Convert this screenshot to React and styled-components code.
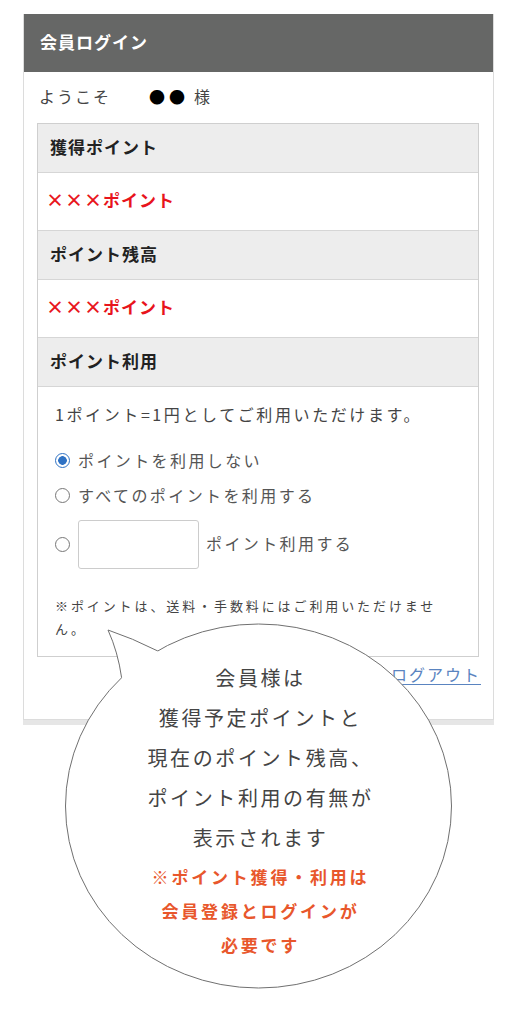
import React from "react";
import styled, { createGlobalStyle } from "styled-components";

const GlobalStyle = createGlobalStyle`
	body {
		margin: 0;
		background: #fff;
		font-family: "Noto Sans CJK JP", "Noto Sans", sans-serif;
		color: #333;
	}
`;

const sections = [
	{ id: 1, title: "獲得ポイント", value: "ポイント" },
	{ id: 2, title: "ポイント残高", value: "ポイント" },
];

const bubbleLines = [
	"会員様は",
	"獲得予定ポイントと",
	"現在のポイント残高、",
	"ポイント利用の有無が",
	"表示されます",
];

const noteLines = ["※ポイント獲得・利用は", "会員登録とログインが", "必要です"];

const App = () => {
	return (
		<Page>
			<GlobalStyle />
			<Card>
				<CardHeader>会員ログイン</CardHeader>
				<CardBody>
					<Welcome>
						ようこそ<Name>●●</Name>様
					</Welcome>
					<PointBox>
						{sections.map(({ id, title, value }) => (
							<React.Fragment key={id}>
								<SectionTitle>{title}</SectionTitle>
								<ValueRow>
									<Cross>×××</Cross>
									{value}
								</ValueRow>
							</React.Fragment>
						))}
						<SectionTitle>ポイント利用</SectionTitle>
						<UseArea>
							<Intro>1ポイント=1円としてご利用いただけます。</Intro>
							<Option>
								<Radio type="radio" name="use" defaultChecked />
								ポイントを利用しない
							</Option>
							<Option $gap="11px">
								<Radio type="radio" name="use" />
								すべてのポイントを利用する
							</Option>
							<Option $gap="13px">
								<Radio type="radio" name="use" />
								<PointInput type="text" />
								<span>ポイント利用する</span>
							</Option>
							<Note>
								※ポイントは、送料・手数料にはご利用いただけませ
								<br />
								ん。
							</Note>
						</UseArea>
					</PointBox>
					<LogoutRow>
						<Logout href="#">ログアウト</Logout>
					</LogoutRow>
				</CardBody>
			</Card>

			{/* speech bubble drawn over the card */}
			<Bubble viewBox="0 0 519 1018" width="519" height="1018">
				<ellipse cx="258.5" cy="806" rx="193" ry="182" fill="#fff" stroke="#707070" strokeWidth="1" />
				<path d="M 121.6 677.7 Q 118 652 108 630 Q 132 638 157.6 650.9 L 175 680 L 140 700 Z" fill="#fff" />
				<path d="M 121.6 677.7 Q 118 652 108 630 Q 132 638 157.6 650.9" fill="none" stroke="#707070" strokeWidth="1" />
			</Bubble>
			<BubbleText>
				{bubbleLines.map((line) => (
					<Line key={line}>{line}</Line>
				))}
				<RedBlock>
					{noteLines.map((line) => (
						<RedLine key={line}>{line}</RedLine>
					))}
				</RedBlock>
			</BubbleText>
		</Page>
	);
};

const Page = styled.div`
	position: relative;
	width: 519px;
	height: 1018px;
	padding: 14px 25px 0 23px;
	box-sizing: border-box;
	overflow: hidden;
`;

const Card = styled.section`
	border: 1px solid #dcdcdc;
	border-top: none;
	background: #fff;
	box-shadow: 0 5px 0 #e6e6e6;
`;

const CardHeader = styled.h2`
	margin: 0;
	height: 58px;
	box-sizing: border-box;
	display: flex;
	align-items: center;
	padding: 0 0 4px 16px;
	background: #666766;
	color: #fff;
	font-size: 17px;
	font-weight: 700;
	letter-spacing: 1px;
`;

const CardBody = styled.div`
	padding: 14px 14px 31px 13px;
`;

const Welcome = styled.p`
	margin: 0 0 13px 2px;
	height: 24px;
	line-height: 20px;
	font-size: 16px;
	letter-spacing: 2px;
	color: #444;
`;

const Name = styled.span`
	color: #000;
	margin: 0 5px 0 38px;
	letter-spacing: 4px;
`;

const PointBox = styled.div`
	border: 1px solid #cfcfcf;
`;

const SectionTitle = styled.h3`
	margin: 0;
	height: 49px;
	box-sizing: border-box;
	display: flex;
	align-items: center;
	padding: 0 0 4px 12px;
	background: #ededed;
	border-bottom: 1px solid #d6d6d6;
	font-size: 17px;
	font-weight: 700;
	letter-spacing: 1px;
	color: #222;
`;

const ValueRow = styled.div`
	height: 58px;
	box-sizing: border-box;
	display: flex;
	align-items: center;
	padding: 0 0 5px 8px;
	border-bottom: 1px solid #d6d6d6;
	color: #e8141c;
	font-size: 17px;
	font-weight: 700;
	letter-spacing: 1px;
`;

const Cross = styled.span`
	font-size: 18px;
	letter-spacing: 1px;
	font-weight: 700;
`;

const UseArea = styled.div`
	padding: 14px 18px 16px 17px;
	color: #444;
`;

const Intro = styled.p`
	margin: 0 0 21px;
	line-height: 26px;
	font-size: 16px;
	letter-spacing: 2.6px;
`;

const Option = styled.label`
	display: flex;
	align-items: center;
	gap: 8px;
	margin-top: ${(p) => p.$gap || "0"};
	min-height: 24px;
	font-size: 16px;
	letter-spacing: 2.4px;
	color: #555;
	span {
		margin-bottom: 3px;
	}
`;

const Radio = styled.input`
	appearance: none;
	margin: 0;
	width: 15px;
	height: 15px;
	flex: none;
	border-radius: 50%;
	border: 1px solid #777;
	background: #fff;
	&:checked {
		border-color: #2f72c4;
		background: radial-gradient(circle, #2f72c4 0 4px, #fff 4.6px);
	}
`;

const PointInput = styled.input`
	width: 121px;
	height: 49px;
	box-sizing: border-box;
	border: 1px solid #cccccc;
	border-radius: 3px;
	margin: 0 -1px 0 0;
`;

const Note = styled.p`
	margin: 25px 0 0;
	line-height: 23px;
	font-size: 13px;
	letter-spacing: 2.9px;
	color: #444;
`;

const LogoutRow = styled.div`
	display: flex;
	justify-content: flex-end;
	margin-top: 5px;
	line-height: 24px;
	padding-bottom: 2px;
`;

const Logout = styled.a`
	color: #5a84c0;
	font-size: 16px;
	letter-spacing: 2px;
	margin-right: -2px;
	text-decoration: underline;
	text-underline-offset: 3px;
`;

const Bubble = styled.svg`
	position: absolute;
	top: 0;
	left: 0;
	pointer-events: none;
`;

const BubbleText = styled.div`
	position: absolute;
	top: 658px;
	left: 0;
	width: 519px;
	display: flex;
	flex-direction: column;
	align-items: center;
	text-align: center;
`;

const Line = styled.div`
	line-height: 40px;
	font-size: 20px;
	letter-spacing: 2.6px;
	color: #444;
	margin-left: 2px;
`;

const RedBlock = styled.div`
	margin-top: 2px;
`;

const RedLine = styled.div`
	line-height: 34px;
	font-size: 17px;
	font-weight: 700;
	letter-spacing: 2.8px;
	color: #e8572c;
	margin-left: 2px;
`;

export default App;
